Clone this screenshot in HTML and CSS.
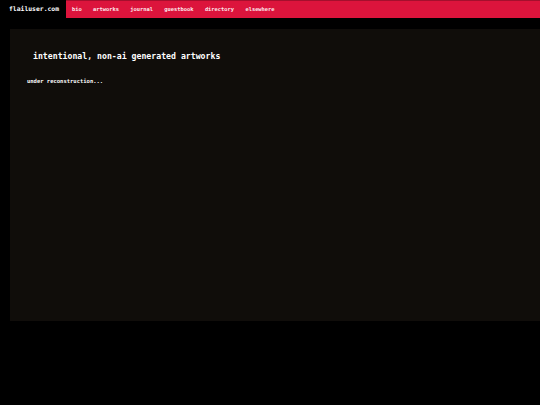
FILE: index.html
```html
<!DOCTYPE html>
<html>
<head>
<meta charset="utf-8">
<title>flailuser.com</title>
<link rel="stylesheet" href="styles.css">
</head>
<body>
<header class="topbar">
  <a class="brand" href="#">flailuser.com</a>
  <nav class="nav">
    <a href="#">bio</a>
    <a href="#">artworks</a>
    <a href="#">journal</a>
    <a href="#">guestbook</a>
    <a href="#">directory</a>
    <a href="#">elsewhere</a>
  </nav>
</header>
<main class="panel">
  <h1 class="title">intentional, non-ai generated artworks</h1>
  <p class="note">under reconstruction...</p>
</main>
</body>
</html>
```

FILE: styles.css
```css
html, body {
  margin: 0;
  padding: 0;
  background: #000;
  font-family: "DejaVu Sans Mono", "Liberation Mono", monospace;
  font-weight: bold;
  color: #fff;
}

.topbar {
  display: flex;
  height: 18px;
}

.brand {
  display: block;
  padding: 0 7px 0 9px;
  font-size: 6.4px;
  line-height: 18px;
  color: #fff;
  text-decoration: none;
}

.nav {
  flex: 1;
  display: flex;
  background: #dc143c;
  padding-left: 6px;
  border-top: 1px solid #a50f2d;
  box-sizing: border-box;
}

.nav a {
  font-size: 5.4px;
  line-height: 16px;
  color: #fde8ec;
  text-decoration: none;
  margin-right: 11.3px;
}

.panel {
  display: block;
  margin: 11px 0 0 10px;
  height: 292px;
  box-sizing: border-box;
  padding: 23px 0 0 17px;
  background: #100d0a;
}

.title {
  margin: 0 0 0 6px;
  font-size: 8.2px;
  line-height: 1;
  font-weight: bold;
}

.note {
  margin: 19px 0 0 0;
  font-size: 5.5px;
  line-height: 1;
}
```
